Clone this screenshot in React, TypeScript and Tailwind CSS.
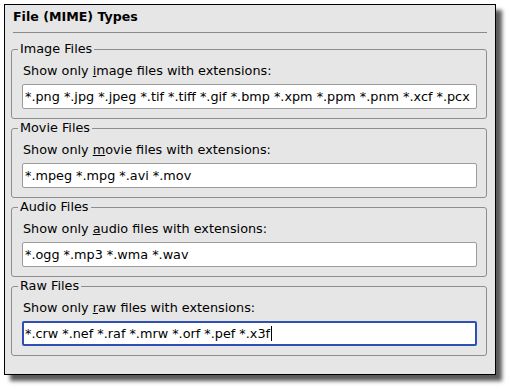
const groups = [
  {
    title: 'Image Files',
    pre: 'Show only ',
    key: 'i',
    post: 'mage files with extensions:',
    value: '*.png *.jpg *.jpeg *.tif *.tiff *.gif *.bmp *.xpm *.ppm *.pnm *.xcf *.pcx',
  },
  {
    title: 'Movie Files',
    pre: 'Show only ',
    key: 'm',
    post: 'ovie files with extensions:',
    value: '*.mpeg *.mpg *.avi *.mov',
  },
  {
    title: 'Audio Files',
    pre: 'Show only ',
    key: 'a',
    post: 'udio files with extensions:',
    value: '*.ogg *.mp3 *.wma *.wav',
  },
  {
    title: 'Raw Files',
    pre: 'Show only ',
    key: 'r',
    post: 'aw files with extensions:',
    value: '*.crw *.nef *.raf *.mrw *.orf *.pef *.x3f',
    focused: true,
  },
];

function Group({ g, first }: { g: (typeof groups)[number]; first: boolean }) {
  return (
    <fieldset
      className={`${first ? 'mt-[8px]' : 'mt-[1px]'} rounded-[3px] border border-[#8e8e8e] pl-[10px] pr-[9px] pb-[9px]`}
    >
      <legend className="-ml-[4px] px-[2px] leading-[16px]">{g.title}</legend>
      <div className="mt-[5px] pl-[1px] leading-[17px]">
        {g.pre}
        <u>{g.key}</u>
        {g.post}
      </div>
      {g.focused ? (
        <div className="mt-[5px] flex h-[25px] items-center rounded-[2px] border-2 border-[#2e4fb4] bg-white pl-[1px] whitespace-nowrap">
          {g.value}
          <span className="ml-[1px] inline-block h-[15px] w-px bg-black" />
        </div>
      ) : (
        <div className="mt-[5px] flex h-[25px] items-center overflow-hidden rounded-[2px] border border-[#9c9c9c] bg-white pl-[2px] whitespace-nowrap">
          {g.value}
        </div>
      )}
    </fieldset>
  );
}

export default function App() {
  return (
    <div className="h-[389px] w-[510px] bg-white pl-[4px] pt-[4px] font-['DejaVu_Sans',sans-serif] text-[12.8px] text-black">
      <div className="flex h-[371px] w-[492px] flex-col border border-black bg-[#e6e6e6] pt-[4px] pl-[6px] pr-[8px] shadow-[6px_6px_4px_rgba(0,0,0,0.65)]">
        <div className="ml-[2px] text-[12.6px] leading-[16px] font-bold">File (MIME) Types</div>
        <div className="mt-[7px] ml-[2px] h-px bg-[#8a8a8a]" />
        {groups.map((g, i) => (
          <Group key={g.title} g={g} first={i === 0} />
        ))}
      </div>
    </div>
  );
}
